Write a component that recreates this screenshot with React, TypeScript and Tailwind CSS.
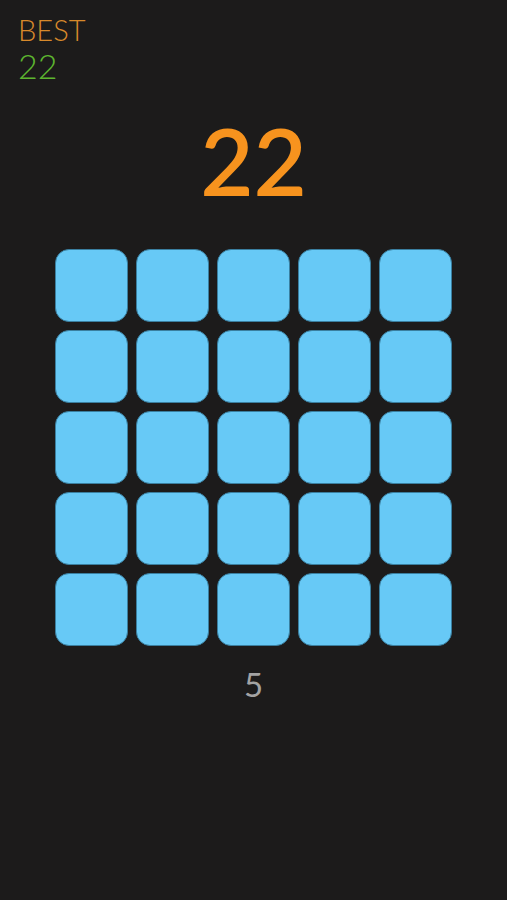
import React from 'react'

const tiles = Array.from({ length: 25 }, (_, i) => i)

export default function App() {
  return (
    <div className="flex h-[900px] w-[507px] flex-col bg-[#1c1b1b] font-['Lato',sans-serif]">
      <div className="pl-[18px] pt-[12px]">
        <div className="text-[29px] font-light leading-[36px] text-[#d8892b]">BEST</div>
        <div className="text-[34px] font-light leading-[36px] text-[#5db52f]">22</div>
      </div>
      <div className="mt-[27px] text-center text-[92px] font-semibold leading-[100px] text-[#f7931e]">22</div>
      <div className="mx-auto mt-[38px] grid grid-cols-5 gap-[8px]">
        {tiles.map((t) => (
          <div
            key={t}
            className="h-[73px] w-[73px] rounded-[14px] border border-[#3a7fa0] bg-[#67c9f6]"
          />
        ))}
      </div>
      <div className="mt-[18px] text-center text-[33px] leading-[40px] text-[#a3a3a3]">5</div>
    </div>
  )
}
